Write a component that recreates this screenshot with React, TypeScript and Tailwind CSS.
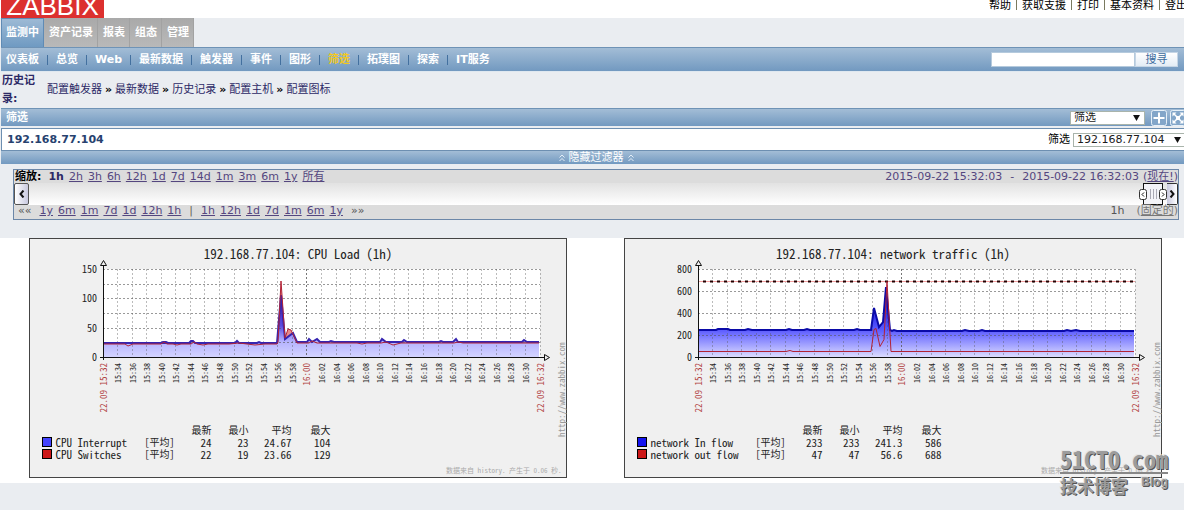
import React from 'react';

const MENU_TABS = ['资产记录', '报表', '组态', '管理'];
const SUB_MENU = ['仪表板', '总览', 'Web', '最新数据', '触发器', '事件', '图形', '筛选', '拓璞图', '探索', 'IT服务'];
const TOP_LINKS = ['帮助', '获取支援', '打印', '基本资料', '登出'];
const HISTORY = ['配置触发器', '最新数据', '历史记录', '配置主机', '配置图标'];
const ZOOMS = ['2h', '3h', '6h', '12h', '1d', '7d', '14d', '1m', '3m', '6m', '1y', '所有'];
const MOVE_BACK = ['1y', '6m', '1m', '7d', '1d', '12h', '1h'];
const MOVE_FORWARD = ['1h', '12h', '1d', '7d', '1m', '6m', '1y'];

const BAR = 'bg-linear-to-b from-[#a3bdd6] to-[#7299c0]';
const GRAPH_FONT = "font-['Noto_Sans_Mono_CJK_SC','DejaVu_Sans_Mono','Noto_Sans_CJK_SC',monospace]";

// plot area inside the graph svg
const LEFT = 74;
const RIGHT = 511;
const TOP = 31;
const BOTTOM = 119;

interface LegendRow {
  name: string;
  color: string;
  values: string[];
}

interface GraphProps {
  id: string;
  title: string;
  labels: string[];
  gridRows: number;
  area: string;
  areaStroke: string;
  gradient: [string, number][];
  gradientTop: number;
  line: string;
  lineFill?: string;
  trigger?: boolean;
  rows: LegendRow[];
  nameWidth: string;
}

/* ---------- header ---------- */

function Header() {
  return (
    <header className="flex h-[18px] items-end justify-between overflow-hidden bg-white pl-px">
      <a href="#" className="flex h-[18px] w-[103px] items-end justify-center overflow-hidden bg-[#dc302e] font-['Liberation_Sans',sans-serif] text-[26px] leading-[23px] text-white">
        ZABBIX
      </a>
      <nav className="flex h-[18px] items-start pr-1 leading-[11px] text-black">
        {TOP_LINKS.map((l, i) => (
          <React.Fragment key={l}>
            {i > 0 && <span className="mx-[5px] h-[10px] border-l border-[#7a7a60]" />}
            <a href="#">{l}</a>
          </React.Fragment>
        ))}
      </nav>
    </header>
  );
}

function MainMenu() {
  return (
    <nav>
      <div className="flex h-[29px] font-bold text-white">
        <a href="#" className="flex items-center border-x border-t border-[#5f8bb5] bg-linear-to-b from-[#9dbad5] to-[#6f9ac2] px-1">
          监测中
        </a>
        {MENU_TABS.map((t) => (
          <a key={t} href="#" className="flex items-center border-r border-[#a2a2a2] bg-linear-to-b from-[#a9a9a9] to-[#b9b9b9] pr-1 pl-[5px]">
            {t}
          </a>
        ))}
      </div>
      <div className={`flex h-[25px] items-center justify-between border-t border-b border-t-[#6f93b6] border-b-[#dfe8f0] pr-[13px] pl-[5px] font-bold text-white ${BAR}`}>
        <div className="flex items-center">
          {SUB_MENU.map((m, i) => (
            <React.Fragment key={m}>
              {i > 0 && <span className="mx-2 h-[10px] border-l border-[#43709f]" />}
              <a href="#" className={m === '筛选' ? 'text-[#f2c81e]' : ''}>
                {m}
              </a>
            </React.Fragment>
          ))}
        </div>
        <form className="flex" onSubmit={(e) => e.preventDefault()}>
          <input aria-label="搜寻" className="h-[15px] w-[144px] border border-[#b5cadd] bg-white px-1 font-normal text-black outline-none" />
          <button className="h-[15px] w-[43px] border border-[#c5d5e5] bg-linear-to-b from-white to-[#e3ecf5] text-center leading-[13px] font-normal text-[#3b6a9c]">
            搜寻
          </button>
        </form>
      </div>
    </nav>
  );
}

function History() {
  return (
    <div className="flex items-center leading-[18px] text-[#2c2966]">
      <b className="w-[46px] pr-2 pl-px">历史记录:</b>
      <div className="flex">
        {HISTORY.map((h, i) => (
          <React.Fragment key={h}>
            {i > 0 && <b className="mx-[3px] text-black">»</b>}
            <a href="#">{h}</a>
          </React.Fragment>
        ))}
      </div>
    </div>
  );
}

/* ---------- page title and filter ---------- */

function Select({ label, value, className }: { label: string; value: string; className: string }) {
  return (
    <span className={`relative inline-flex ${className}`}>
      <select aria-label={label} className="h-[14px] w-full appearance-none border border-[#a9b4ab] bg-white pl-[3px] leading-[12px] text-[#1b1b1b] outline-none">
        <option>{value}</option>
      </select>
      <svg viewBox="0 0 8 7" className="pointer-events-none absolute top-1 right-[5px] h-[6px] w-[7px]">
        <path d="M0 0h8L4 7z" fill="#111" />
      </svg>
    </span>
  );
}

function TitleBars() {
  return (
    <div>
      <div className={`flex h-[18px] items-center justify-between border-t border-[#6f93b6] pr-[5px] pl-[5px] font-bold text-white ${BAR}`}>
        <h1>筛选</h1>
        <div className="flex items-center font-normal">
          <Select label="筛选类型" value="筛选" className="mr-[6px] w-[75px]" />
          <button aria-label="添加到收藏" className="mr-[3px]">
            <svg viewBox="0 0 16 16" className="h-4 w-4">
              <rect x="0.5" y="0.5" width="15" height="15" rx="2" fill="#83a6c9" stroke="#e6f0f8" />
              <path d="M8 2.5v11M2.5 8h11" stroke="#fff" strokeWidth="2" />
            </svg>
          </button>
          <button aria-label="全屏">
            <svg viewBox="0 0 16 16" className="h-4 w-4">
              <rect x="0.5" y="0.5" width="15" height="15" rx="2" fill="#83a6c9" stroke="#e6f0f8" />
              <path d="M4 4l8 8M12 4l-8 8" stroke="#fff" strokeWidth="1.5" />
              <path d="M2.5 2.5h4l-4 4zM13.5 2.5v4l-4-4zM2.5 13.5v-4l4 4zM13.5 13.5h-4l4-4z" fill="#fff" />
              <rect x="6" y="6" width="4" height="4" fill="#fff" />
            </svg>
          </button>
        </div>
      </div>
      <div className="mt-[2px] flex h-[23px] items-center justify-between border border-[#6d8fb1] bg-white pl-[5px]">
        <h2 className="font-bold text-[#27426f]">192.168.77.104</h2>
        <div className="flex items-center text-black">
          <span className="mr-[3px]">筛选</span>
          <Select label="主机" value="192.168.77.104" className="mr-1 w-[113px]" />
        </div>
      </div>
      <button className={`flex h-[13px] w-full items-center justify-center gap-1 leading-[13px] text-white ${BAR}`}>
        <Chevrons />
        隐藏过滤器
        <Chevrons />
      </button>
    </div>
  );
}

function Chevrons() {
  return (
    <svg viewBox="0 0 6 8" className="h-2 w-[6px]" fill="none" stroke="#e3edf6">
      <path d="M0.5 3.5L3 1l2.5 2.5M0.5 7L3 4.5 5.5 7" />
    </svg>
  );
}

/* ---------- time line ---------- */

function TimeLinks({ items }: { items: string[] }) {
  return (
    <>
      {items.map((t) => (
        <a key={t} href="#" className="text-[#54467f] underline">
          {t}
        </a>
      ))}
    </>
  );
}

function TimeLine() {
  return (
    <div className="mx-3 mt-[5px] mb-[18px] border border-[#6c87a8] bg-[#dcdcdc] text-[#54467f]">
      <div className="flex h-[13px] items-center justify-between pl-px leading-[13px]">
        <div className="flex gap-[5px]">
          <b className="mr-[2px] text-black">缩放:</b>
          <b className="text-[#2c2966]">1h</b>
          <TimeLinks items={ZOOMS} />
        </div>
        <div className="flex">
          <span>2015-09-22 15:32:03</span>
          <span className="mx-2">-</span>
          <span>2015-09-22 16:32:03</span>
          <span className="ml-1">
            (
            <a href="#" className="underline">
              现在!
            </a>
            )
          </span>
        </div>
      </div>
      <div className="flex h-[22px] bg-linear-to-b from-[#e2e2e2] to-white">
        <button aria-label="向左" className="flex w-[15px] items-center justify-center rounded-xs border border-[#555] bg-linear-to-r from-white to-[#c9c9df]">
          <svg viewBox="0 0 6 8" className="h-2 w-[6px]" fill="none" stroke="#111" strokeWidth="2">
            <path d="M4.5 0.5L1.5 4l3 3.5" />
          </svg>
        </button>
        <div className="flex-1" />
        <button aria-label="时间范围">
          <svg viewBox="0 0 28 22" className="h-[22px] w-7" fill="none">
            <rect x="4.5" y="0.5" width="19" height="21" fill="#f3f3f8" stroke="#111" />
            <path d="M11.5 6v10M14.5 6v10M17.5 6v10" stroke="#a9a9b4" />
            <rect x="0.5" y="6.5" width="7" height="10" rx="2" fill="#fff" stroke="#333" />
            <rect x="20.5" y="6.5" width="7" height="10" rx="2" fill="#fff" stroke="#333" />
            <path d="M5 9.5l-2 2 2 2M23 9.5l2 2-2 2" stroke="#111" />
          </svg>
        </button>
        <button aria-label="向右" className="flex w-[11px] items-center justify-center rounded-r-xs border border-l-0 border-[#333] bg-linear-to-r from-[#c9c9df] to-white">
          <svg viewBox="0 0 6 8" className="h-2 w-[6px]" fill="none" stroke="#111" strokeWidth="2">
            <path d="M1.5 0.5L4.5 4l-3 3.5" />
          </svg>
        </button>
      </div>
      <div className="flex h-[14px] items-start justify-between pl-1 leading-[11px]">
        <div className="flex gap-[5px]">
          <a href="#" className="mr-[3px] text-[#555]">««</a>
          <TimeLinks items={MOVE_BACK} />
          <span className="mx-[3px] text-[#665]">|</span>
          <TimeLinks items={MOVE_FORWARD} />
          <a href="#" className="ml-[3px] text-[#555]">»»</a>
        </div>
        <div className="flex gap-3 text-[#555]">
          <span>1h</span>
          <span className="text-[#777]">
            (
            <a href="#" className="underline">
              固定的
            </a>
            )
          </span>
        </div>
      </div>
    </div>
  );
}

/* ---------- graphs ---------- */

function tickLabel(i: number) {
  const m = 32 + i * 2;
  return m < 60 ? `15:${m}` : `16:${String(m - 60).padStart(2, '0')}`;
}

function Graph(p: GraphProps) {
  const step = (RIGHT - LEFT) / 30;
  const ticks = Array.from({ length: 31 }, (_, i) => i);
  const rows = Array.from({ length: p.gridRows }, (_, i) => TOP + (i * (BOTTOM - TOP)) / p.gridRows);

  return (
    <figure className={`w-[538px] max-w-full border border-[#444] bg-[#f0f0f0] ${GRAPH_FONT}`}>
      <svg viewBox="1 1 536 185" className="block w-full overflow-visible">
        <defs>
          <linearGradient id={p.id} gradientUnits="userSpaceOnUse" x1="0" y1={p.gradientTop} x2="0" y2={BOTTOM}>
            {p.gradient.map(([color, offset]) => (
              <stop key={offset} offset={offset} stopColor={color} />
            ))}
          </linearGradient>
        </defs>
        <text x="269" y="21" textAnchor="middle" fontSize="13" fill="#222">
          {p.title}
        </text>
        <rect x={LEFT} y={TOP} width={RIGHT - LEFT} height={BOTTOM - TOP} fill="#fff" />

        {p.lineFill && <path d={`${p.line}V${BOTTOM}H${LEFT}Z`} fill={p.lineFill} />}
        <path d={`${p.area}V${BOTTOM}H${LEFT}Z`} fill={`url(#${p.id})`} />

        {/* grid */}
        <g stroke="#555" strokeOpacity="0.6" strokeDasharray="2 2" shapeRendering="crispEdges">
          {rows.map((y) => (
            <path key={y} d={`M${LEFT} ${y + 0.5}H${RIGHT}`} />
          ))}
          {ticks.slice(1).map((i) => (
            <path key={i} d={`M${LEFT + i * step} ${TOP}V${BOTTOM}`} strokeOpacity={i === 14 ? 0.8 : 0.4} />
          ))}
        </g>

        {p.trigger && (
          <g>
            <path d={`M${LEFT} 43.5H${RIGHT}`} stroke="#f2a0a0" />
            <path d={`M${LEFT + 5} 43.5H${RIGHT}`} stroke="#200" strokeWidth="2" strokeDasharray="3 4" />
          </g>
        )}
        <path d={p.area} fill="none" stroke={p.areaStroke} strokeWidth="2" />
        <path d={p.line} fill="none" stroke="#b22236" strokeWidth="1" />

        {/* axes */}
        <path d={`M${LEFT + 0.5} 28V${BOTTOM + 3}M${LEFT - 3} ${BOTTOM + 0.5}H516`} stroke="#111" fill="none" />
        <path d={`M${LEFT - 2.5} 27.5h6l-3-5zM515.5 116.5v6l5-3z`} stroke="#111" fill="#f0f0f0" />

        {p.labels.map((l, i) => (
          <text key={l} x="68" y={BOTTOM + 4 - (i * (BOTTOM - TOP)) / (p.labels.length - 1)} textAnchor="end" fontSize="10" fill="#222">
            {l}
          </text>
        ))}
        {ticks.map((i) => {
          const edge = i === 0 || i === 30;
          const red = edge || i === 14;
          return (
            <text
              key={i}
              transform={`translate(${LEFT + i * step + 3.5} 125) rotate(-90)`}
              textAnchor="end"
              fontSize={red ? 9 : 8}
              fill={red ? '#b04040' : '#222'}
            >
              {i === 0 ? '22.09 15:32' : i === 30 ? '22.09 16:32' : tickLabel(i)}
            </text>
          );
        })}
        <text transform="translate(536 199) rotate(-90)" fontSize="9" fill="#999">
          http://www.zabbix.com
        </text>
      </svg>

      <table className="ml-3 w-max table-fixed text-right text-[11px] leading-[12px] text-[#222]">
        <colgroup>
          <col className={p.nameWidth} />
          <col className="w-[37px]" />
          <col className="w-[30px]" />
          <col className="w-[37px]" />
          <col className="w-[43px]" />
          <col className="w-[39px]" />
        </colgroup>
        <thead className="text-[10px]">
          <tr>
            <td />
            <td />
            {['最新', '最小', '平均', '最大'].map((h) => (
              <th key={h} scope="col" className="font-normal">
                {h}
              </th>
            ))}
          </tr>
        </thead>
        <tbody>
          {p.rows.map((r) => (
            <tr key={r.name}>
              <th scope="row" className="text-left font-normal whitespace-nowrap">
                <span className="flex items-center gap-1">
                  <span className={`h-[10px] w-[10px] border border-black ${r.color}`} />
                  {r.name}
                </span>
              </th>
              <td className="text-left text-[10px]">[平均]</td>
              {r.values.map((v, i) => (
                <td key={i}>{v}</td>
              ))}
            </tr>
          ))}
        </tbody>
      </table>
      <figcaption className="pt-1 pr-1 pb-px text-right text-[7px] leading-[12px] text-[#aaa]">数据来自 history. 产生于 0.06 秒.</figcaption>
    </figure>
  );
}

const CPU_AREA =
  'M74 105H132l2-1 3 0 2 1H132H162l-2 0 2-2 2 0 2 2H206l2-2 2 2H228l2-1 2 1H248l4-48 4 44 4-3 4-3 4 9H278l2-3 3 3 5-3 3 3H300l2-1 3 1H351l2-3 4 3H373l2-2 3 2H410l2-1 2 1H424l3-3 2 3H493l2-2 3 2H510';
const CPU_LINE =
  'M74 106H96l3 2 5-2H132l3-2 3 2 6 0 4 1 4-1H162l3-2 3 2 6 1 5-1H200l10-1 8 1 8 1 10-1H248l1-2 3-61 4 57 3-9 3 1 6 13H280l3-2 5 2H328l5 1 5-1H352l5-1 7 3 8-2H425l4-1 5 1H510';
const NET_AREA =
  'M74 92H92l2-1 10 0 2 1H121l3-1 4 1H162l3-1 3 1H180l3-1 3 1H230l3-1 3 1H247l3-22 5 19 4-5 3-35 4 43 2 1 2-1 3 1H338l3-1 4 1 10 0 3-1 3 1H440l3-1 4 1 5-1 4 1H510';
const NET_LINE = 'M74 113.5H162l4-1 3 1H247l3-22 2-1 4 18 4-7 3-58 4 70H510';

function Watermark() {
  return (
    <div className={`pointer-events-none absolute right-[16px] bottom-[14px] font-bold text-[#9c9c9c] [text-shadow:1px_1px_0_#555,-1px_-1px_0_#e6e6e6] ${GRAPH_FONT}`}>
      <div className="border-b-2 border-[#888] text-[24px] leading-[26px]">51CTO.com</div>
      <div className="flex items-start justify-between">
        <span className="pt-[2px] text-[17px] leading-[20px]">技术博客</span>
        <span className="font-['Liberation_Sans',sans-serif] text-[12px] leading-[16px]">Blog</span>
      </div>
    </div>
  );
}

export default function App() {
  return (
    <div lang="zh-CN" className="relative min-h-screen overflow-hidden bg-[#eaedf1] font-['DejaVu_Sans','Noto_Sans_CJK_SC',sans-serif] text-[11px] leading-[14px]">
      {/* the page is slightly wider than the window */}
      <div className="w-[calc(100%+7px)]">
        <Header />
        <div className="ml-px">
          <MainMenu />
          <History />
          <TitleBars />
          <TimeLine />
        </div>
        <main className="grid grid-cols-2 justify-items-center bg-white pr-px pb-[5px]">
          <Graph
            id="cpu"
            title="192.168.77.104: CPU Load (1h)"
            labels={['0', '50', '100', '150']}
            gridRows={6}
            area={CPU_AREA}
            areaStroke="#3524b0"
            gradient={[['#4a1898', 0], ['#5a4ae0', 0.5], ['#b4b2ff', 0.75], ['#d4d4ff', 1]]}
            gradientTop={56}
            line={CPU_LINE}
            lineFill="#e58a8a"
            rows={[
              { name: 'CPU Interrupt', color: 'bg-[#4444ff]', values: ['24', '23', '24.67', '104'] },
              { name: 'CPU Switches', color: 'bg-[#cc1818]', values: ['22', '19', '23.66', '129'] },
            ]}
            nameWidth="w-[103px]"
          />
          <Graph
            id="net"
            title="192.168.77.104: network traffic (1h)"
            labels={['0', '200', '400', '600', '800']}
            gridRows={4}
            area={NET_AREA}
            areaStroke="#0a0aa8"
            gradient={[['#2a10a0', 0], ['#3838f0', 0.4], ['#5c5cff', 0.6], ['#dcdcff', 1]]}
            gradientTop={52}
            line={NET_LINE}
            trigger
            rows={[
              { name: 'network In flow', color: 'bg-[#1414f0]', values: ['233', '233', '241.3', '586'] },
              { name: 'network out flow', color: 'bg-[#cc1818]', values: ['47', '47', '56.6', '688'] },
            ]}
            nameWidth="w-[119px]"
          />
        </main>
      </div>
      <Watermark />
    </div>
  );
}
